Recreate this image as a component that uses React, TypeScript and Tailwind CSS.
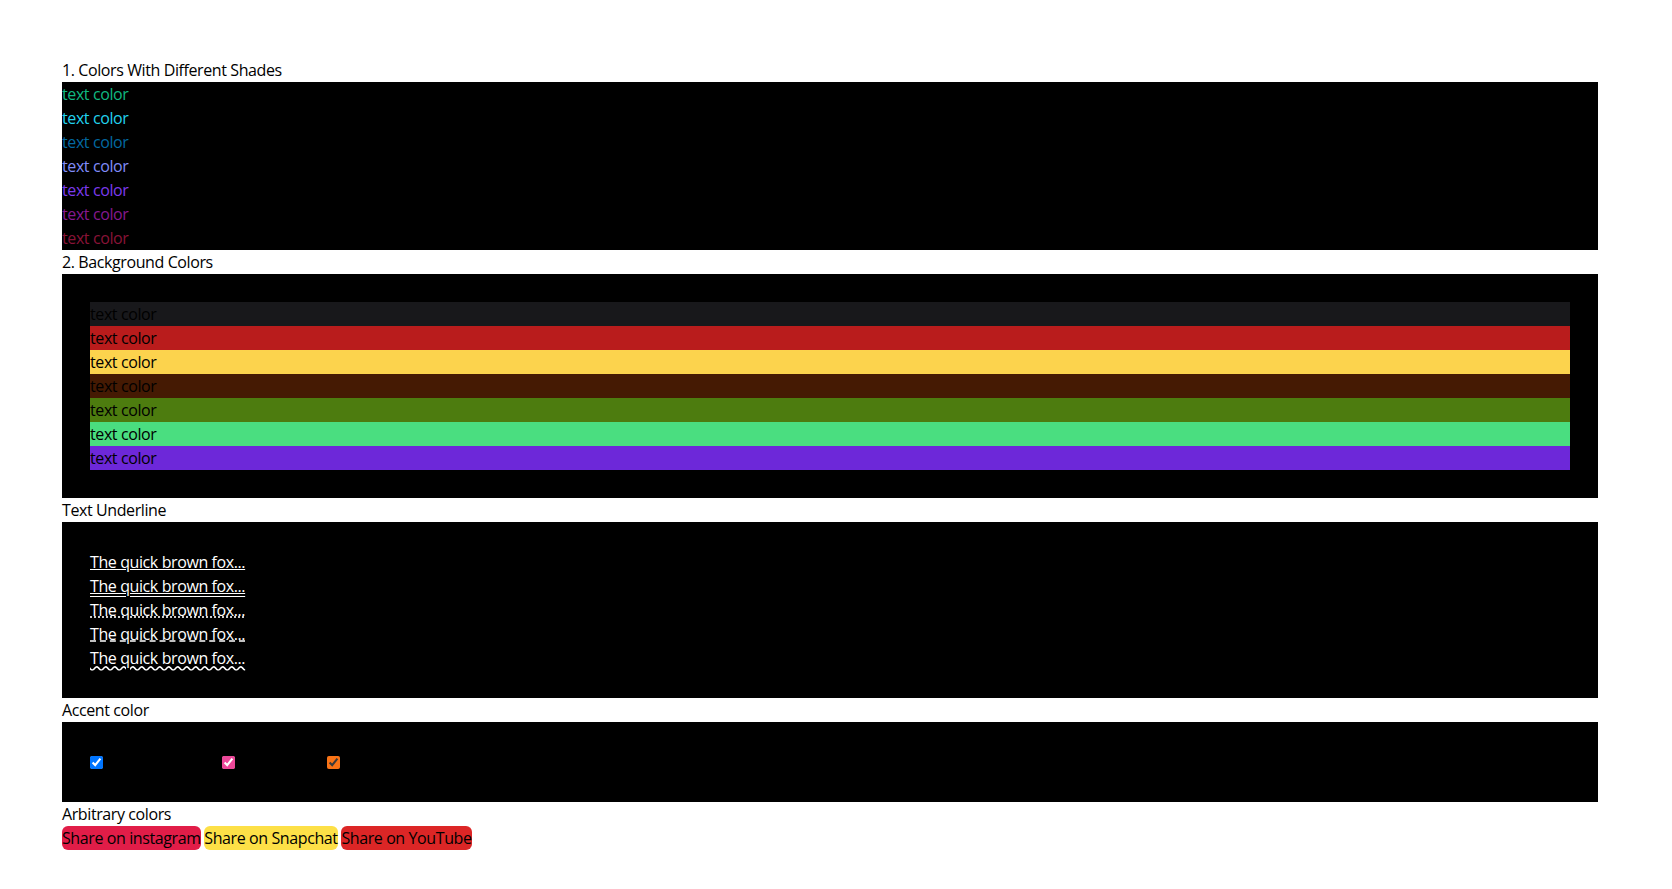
import React from "react";

const shades = [
  "text-[#10b981]",
  "text-[#22d3ee]",
  "text-[#0369a1]",
  "text-[#818cf8]",
  "text-[#7c3aed]",
  "text-[#86198f]",
  "text-[#881337]",
];

const bgs = [
  "bg-[#18181b]",
  "bg-[#b91c1c]",
  "bg-[#fcd34d]",
  "bg-[#451a03]",
  "bg-[#4d7c0f]",
  "bg-[#4ade80]",
  "bg-[#6d28d9]",
];

export default function App() {
  return (
    <div className="min-h-screen bg-white pt-[58px] px-[62px] font-['Open_Sans',sans-serif] text-base leading-6 tracking-[-0.4px] text-black">
      <div className="w-[1536px]">
        <div>1. Colors With Different Shades</div>
        <div className="bg-black">
          {shades.map((c, i) => (
            <p key={i} className={c}>
              text color
            </p>
          ))}
        </div>

        <div>2. Background Colors</div>
        <div className="bg-black p-7">
          {bgs.map((c, i) => (
            <p key={i} className={`${c} text-black`}>
              text color
            </p>
          ))}
        </div>

        <div>Text Underline</div>
        <div className="bg-black p-7 text-white">
          <p className="underline decoration-white">The quick brown fox...</p>
          <p className="underline decoration-double decoration-white">The quick brown fox...</p>
          <p className="underline decoration-dotted decoration-white">The quick brown fox...</p>
          <p className="underline decoration-dashed decoration-white">The quick brown fox...</p>
          <p className="underline decoration-wavy decoration-white">The quick brown fox...</p>
        </div>

        <div>Accent color</div>
        <div className="bg-black p-7">
          <div className="flex h-6 items-center">
            <input type="checkbox" defaultChecked className="h-[13px] w-[13px]" />
            <input type="checkbox" defaultChecked className="ml-[119px] h-[13px] w-[13px] accent-[#ec4899]" />
            <input type="checkbox" defaultChecked className="ml-[92px] h-[13px] w-[13px] accent-[#f97316]" />
          </div>
        </div>

        <div>Arbitrary colors</div>
        <div>
          <button className="rounded-md bg-[#e11d48]">Share on instagram</button>{" "}
          <button className="rounded-md bg-[#fde047]">Share on Snapchat</button>{" "}
          <button className="rounded-md bg-[#dc2626]">Share on YouTube</button>
        </div>
      </div>
    </div>
  );
}
